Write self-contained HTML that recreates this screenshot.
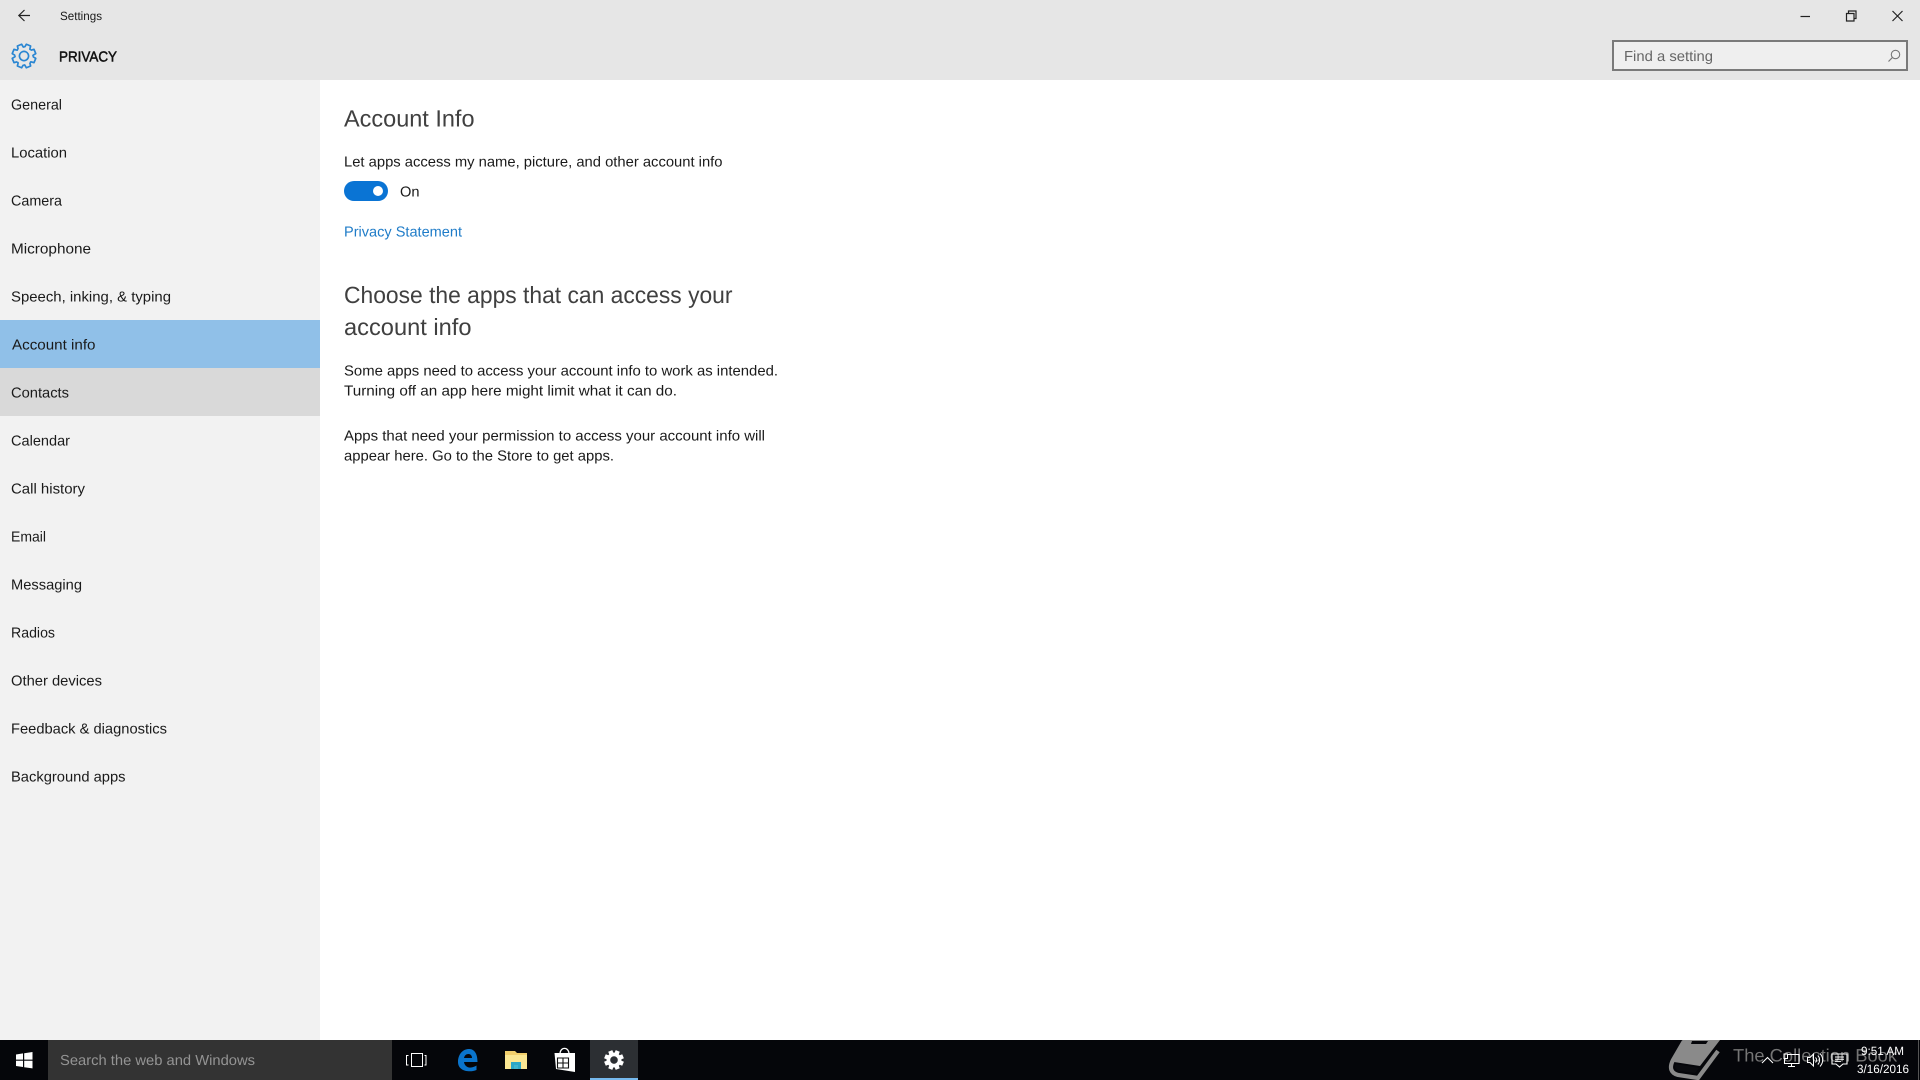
<!DOCTYPE html>
<html lang="en">
<head>
<meta charset="utf-8">
<title>Settings</title>
<style>
html,body{margin:0;padding:0;background:#fff;width:1920px;height:1080px;overflow:hidden}
svg{display:block;position:absolute;left:0;top:0}
text{font-family:"Liberation Sans",sans-serif;font-size:14.5px;fill:#1a1a1a;text-rendering:geometricPrecision}
.t{font-size:23.5px;fill:#404040}
</style>
</head>
<body>
<svg width="1920" height="1080" viewBox="0 0 1920 1080" xmlns="http://www.w3.org/2000/svg">
<defs>
<g id="tooth"><path d="M8.56,-2.78 L11.78,-2.29 L11.78,2.29 L8.56,2.78 A9,9 0 0 1 8.02,4.09" fill="none" stroke="#2a86d2" stroke-width="1.7" stroke-linejoin="round"/></g>
</defs>
<rect width="1920" height="1080" fill="#fff"/>
<rect width="1920" height="80" fill="#e6e6e6"/>
<rect y="80" width="320" height="960" fill="#f2f2f2"/>
<rect y="320" width="320" height="48" fill="#90c0e8"/>
<rect y="368" width="320" height="48" fill="#d9d9d9"/>

<!-- title bar -->
<path d="M30,15.5 H19 M24.5,10 L18.8,15.5 L24.5,21" fill="none" stroke="#222" stroke-width="1.2"/>
<text x="60" y="20" style="font-size:12px" textLength="42" lengthAdjust="spacingAndGlyphs">Settings</text>
<g transform="translate(24 56) rotate(22.5)">
<use href="#tooth"/><use href="#tooth" transform="rotate(45)"/><use href="#tooth" transform="rotate(90)"/><use href="#tooth" transform="rotate(135)"/><use href="#tooth" transform="rotate(180)"/><use href="#tooth" transform="rotate(225)"/><use href="#tooth" transform="rotate(270)"/><use href="#tooth" transform="rotate(315)"/>
<circle r="4.6" fill="none" stroke="#2a86d2" stroke-width="1.7"/>
</g>
<text x="59" y="61.5" textLength="58" lengthAdjust="spacingAndGlyphs" stroke="#111" stroke-width=".5" style="fill:#111">PRIVACY</text>

<!-- window controls -->
<path d="M1800.5,16.5 H1810" stroke="#222" stroke-width="1.2" fill="none"/>
<path d="M1846.5,13.5 h7.5 v7.5 h-7.5 z M1848.5,13.5 v-2.5 h7.5 v7.5 h-2" fill="none" stroke="#222" stroke-width="1.2"/>
<path d="M1892.5,11 L1902.5,21 M1902.5,11 L1892.5,21" stroke="#222" stroke-width="1.2" fill="none"/>

<!-- search box -->
<rect x="1613" y="41" width="294" height="29" fill="#efefef" stroke="#7a7a7a" stroke-width="2"/>
<text x="1624" y="61" textLength="89" lengthAdjust="spacingAndGlyphs" style="fill:#666">Find a setting</text>
<circle cx="1895.5" cy="54.5" r="4.2" fill="none" stroke="#777" stroke-width="1.1"/>
<path d="M1892.4,57.5 L1888.5,61.5" stroke="#777" stroke-width="1.2" fill="none"/>

<!-- nav -->
<g transform="translate(0 -0.5)">
<text x="11" y="110" textLength="51" lengthAdjust="spacingAndGlyphs">General</text>
<text x="11" y="158" textLength="56" lengthAdjust="spacingAndGlyphs">Location</text>
<text x="11" y="206" textLength="51" lengthAdjust="spacingAndGlyphs">Camera</text>
<text x="11" y="254" textLength="80" lengthAdjust="spacingAndGlyphs">Microphone</text>
<text x="11" y="302" textLength="160" lengthAdjust="spacingAndGlyphs">Speech, inking, &amp; typing</text>
<text x="12" y="350" textLength="83.5" lengthAdjust="spacingAndGlyphs">Account info</text>
<text x="11" y="398" textLength="58" lengthAdjust="spacingAndGlyphs">Contacts</text>
<text x="11" y="446" textLength="59" lengthAdjust="spacingAndGlyphs">Calendar</text>
<text x="11" y="494" textLength="74" lengthAdjust="spacingAndGlyphs">Call history</text>
<text x="11" y="542" textLength="35" lengthAdjust="spacingAndGlyphs">Email</text>
<text x="11" y="590" textLength="71" lengthAdjust="spacingAndGlyphs">Messaging</text>
<text x="11" y="638" textLength="44" lengthAdjust="spacingAndGlyphs">Radios</text>
<text x="11" y="686" textLength="91" lengthAdjust="spacingAndGlyphs">Other devices</text>
<text x="11" y="734" textLength="156" lengthAdjust="spacingAndGlyphs">Feedback &amp; diagnostics</text>
<text x="11" y="782" textLength="114.5" lengthAdjust="spacingAndGlyphs">Background apps</text>
</g>

<!-- main -->
<text class="t" x="344" y="126.5" textLength="130.5" lengthAdjust="spacingAndGlyphs">Account Info</text>
<text x="344" y="166.5" textLength="378.5" lengthAdjust="spacingAndGlyphs">Let apps access my name, picture, and other account info</text>
<rect x="344" y="181" width="44" height="20" rx="10" fill="#0a74d4"/>
<circle cx="378" cy="191" r="5" fill="#fff"/>
<text x="400" y="196.5" textLength="19.5" lengthAdjust="spacingAndGlyphs">On</text>
<text x="344" y="236.5" textLength="118" lengthAdjust="spacingAndGlyphs" style="fill:#1f7cc8">Privacy Statement</text>
<text class="t" x="344" y="303" textLength="388.5" lengthAdjust="spacingAndGlyphs">Choose the apps that can access your</text>
<text class="t" x="344" y="335" textLength="127.5" lengthAdjust="spacingAndGlyphs">account info</text>
<text x="344" y="375.5" textLength="434" lengthAdjust="spacingAndGlyphs">Some apps need to access your account info to work as intended.</text>
<text x="344" y="395.5" textLength="333" lengthAdjust="spacingAndGlyphs">Turning off an app here might limit what it can do.</text>
<text x="344" y="440.5" textLength="421" lengthAdjust="spacingAndGlyphs">Apps that need your permission to access your account info will</text>
<text x="344" y="460.5" textLength="270" lengthAdjust="spacingAndGlyphs">appear here. Go to the Store to get apps.</text>

<!-- taskbar -->
<rect y="1040" width="1920" height="40" fill="#05060a"/>
<path d="M16,1054.5 L23,1053.4 V1059.6 H16 Z M24.2,1053.2 L32.5,1052 V1059.6 H24.2 Z M16,1060.8 H23 V1067 L16,1066 Z M24.2,1060.8 H32.5 V1068.4 L24.2,1067.2 Z" fill="#fff"/>
<rect x="48" y="1040" width="344" height="40" fill="#333"/>
<text x="60" y="1065" textLength="195" lengthAdjust="spacingAndGlyphs" style="fill:#949494">Search the web and Windows</text>

<!-- task view -->
<rect x="411.5" y="1053.5" width="11" height="13" fill="none" stroke="#fff" stroke-width="1"/>
<path d="M408.5,1055.5 H406.5 V1065 H408.5 M424.5,1055.5 H426 V1065 H424.5" fill="none" stroke="#fff" stroke-width="1"/>

<!-- edge -->
<path fill-rule="evenodd" d="M458,1062 C458,1054 463,1049 469,1049 C474,1049 477.5,1053 477.5,1062 L464,1062 C464.5,1066 468,1068 471,1067.5 C473,1067.3 475,1066.5 476.5,1065.5 L476.5,1070 C474,1071 472,1071.3 470,1071.3 C463,1071.3 458,1068 458,1062 Z M464,1058 L472,1058 C472,1055.5 470.5,1054 468.5,1054 C466,1054 464.5,1055.5 464,1058 Z" fill="#0a74cc"/>

<!-- explorer -->
<path d="M505,1051 H515 L517,1053 H527 V1069 H505 Z" fill="#f2cf6c"/>
<rect x="505" y="1055" width="22" height="14" fill="#fbe793"/>
<rect x="511" y="1062" width="10" height="7" fill="#2ba7c8"/>
<rect x="514" y="1065" width="4" height="4" fill="#3fb5d0"/>

<!-- store -->
<path d="M560,1054 C560,1046.5 569,1046.5 569,1054" fill="none" stroke="#fff" stroke-width="1.3"/>
<path d="M554.5,1053 H575 V1072 L556,1069 Z" fill="#fff"/>
<path d="M557.5,1058 H568.5 V1068 H557.5 Z M563,1058 V1068 M557.5,1063 H568.5" fill="none" stroke="#111" stroke-width="1.1"/>

<!-- settings cell -->
<rect x="590" y="1040" width="48" height="40" fill="#2c2f33"/>
<rect x="590" y="1078" width="48" height="2" fill="#76b9ed"/>
<g transform="translate(614 1060) rotate(22.5)" fill="#fff">
<circle r="5.6" fill="none" stroke="#fff" stroke-width="3.6"/>
<rect x="5" y="-2.2" width="4.8" height="4.4"/>
<rect x="5" y="-2.2" width="4.8" height="4.4" transform="rotate(45)"/>
<rect x="5" y="-2.2" width="4.8" height="4.4" transform="rotate(90)"/>
<rect x="5" y="-2.2" width="4.8" height="4.4" transform="rotate(135)"/>
<rect x="5" y="-2.2" width="4.8" height="4.4" transform="rotate(180)"/>
<rect x="5" y="-2.2" width="4.8" height="4.4" transform="rotate(225)"/>
<rect x="5" y="-2.2" width="4.8" height="4.4" transform="rotate(270)"/>
<rect x="5" y="-2.2" width="4.8" height="4.4" transform="rotate(315)"/>
</g>

<!-- watermark book -->
<path d="M1683,1040 H1720 L1700,1066 L1674,1062 Z" fill="#8a8a8a"/>
<path d="M1692,1041 H1708 L1706,1044 H1691 Z" fill="#05060a"/>
<path d="M1684,1041 L1673,1060 C1669,1068 1671,1073 1678,1075 L1698,1078 L1718,1051" fill="none" stroke="#8a8a8a" stroke-width="4.2"/>
<path d="M1676,1064 L1699,1068 L1695,1073 L1680,1071 C1675,1070 1674,1067 1676,1064 Z" fill="#0a0b0f"/>
<text x="1733" y="1061.5" textLength="164" lengthAdjust="spacingAndGlyphs" style="font-size:18px;fill:#757575">The Collection Book</text>

<!-- tray -->
<path d="M1762,1063 L1767.5,1057.5 L1773,1063" fill="none" stroke="#fff" stroke-width="1.1"/>
<path d="M1787.5,1054.5 H1799 V1063.5 H1784.5 V1059" fill="none" stroke="#fff" stroke-width="1.1"/>
<rect x="1784" y="1054" width="3.5" height="4.5" fill="none" stroke="#fff" stroke-width="1"/>
<path d="M1791.5,1063.5 V1066.5 M1788,1066.5 H1795" fill="none" stroke="#fff" stroke-width="1.1"/>
<path d="M1807.5,1057.5 H1810 L1813.5,1054 V1066 L1810,1062.5 H1807.5 Z" fill="none" stroke="#fff" stroke-width="1"/>
<path d="M1815.5,1057.5 C1817,1059 1817,1061 1815.5,1062.5 M1817.8,1055.5 C1820.2,1058 1820.2,1062 1817.8,1064.5 M1820,1053.5 C1823.6,1057.5 1823.6,1062.5 1820,1066.5" fill="none" stroke="#fff" stroke-width="1"/>
<path d="M1832,1054 H1847 V1064 H1843 L1839.5,1067 L1836,1064 H1832 Z" fill="none" stroke="#fff" stroke-width="1.1"/>
<path d="M1835,1057 H1844 M1835,1059.2 H1844 M1835,1061.4 H1841" stroke="#fff" stroke-width="1" fill="none"/>
<text x="1861" y="1055" textLength="43" lengthAdjust="spacingAndGlyphs" style="font-size:12px;fill:#fff">9:51 AM</text>
<text x="1857" y="1073" textLength="52" lengthAdjust="spacingAndGlyphs" style="font-size:12px;fill:#fff">3/16/2016</text>
<rect x="1918" y="1040" width="1" height="40" fill="#555"/>
</svg>
</body>
</html>
